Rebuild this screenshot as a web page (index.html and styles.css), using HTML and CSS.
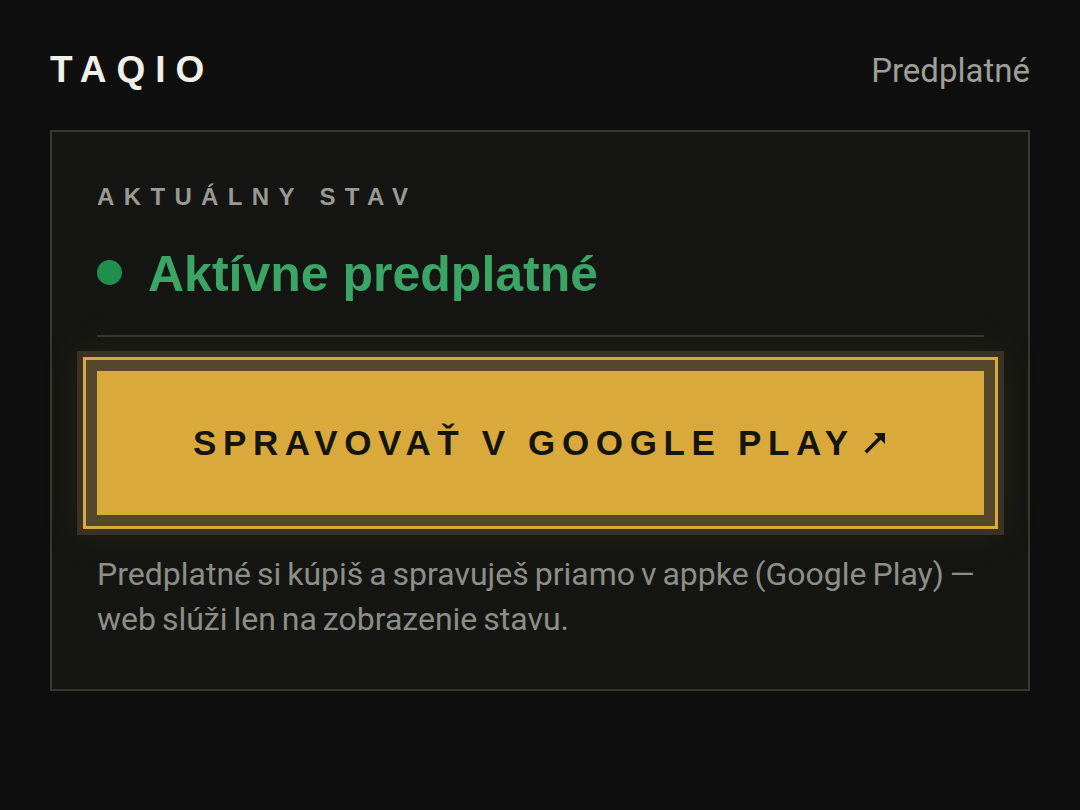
FILE: index.html
```html
<!DOCTYPE html>
<html lang="sk">
<head>
<meta charset="utf-8">
<title>TAQIO – Predplatné</title>
<link rel="stylesheet" href="styles.css">
</head>
<body>
<div class="page">
  <header class="topbar">
    <div class="logo">TAQIO</div>
    <div class="nav-title">Predplatné</div>
  </header>
  <section class="card">
    <div class="label">AKTUÁLNY STAV</div>
    <div class="status">
      <span class="dot"></span>
      <span class="status-text">Aktívne predplatné</span>
    </div>
    <div class="divider"></div>
    <a class="manage-btn" href="#"><span class="btn-text">SPRAVOVAŤ V GOOGLE PLAY</span><svg class="arrow" viewBox="0 0 24 24" width="24" height="24" aria-hidden="true"><path d="M3 21 L16 8" stroke="#141410" stroke-width="3.6" stroke-linecap="square" fill="none"/><path d="M10 3 H21 V14 Z" fill="#141410"/></svg></a>
    <p class="note">Predplatné si kúpiš a spravuješ priamo v appke (Google Play) — web slúži len na zobrazenie stavu.</p>
  </section>
</div>
</body>
</html>
```
FILE: styles.css
```css
html, body {
  margin: 0;
  padding: 0;
  background: #0e0f0e;
}
body {
  font-family: Roboto, "Liberation Sans", sans-serif;
}
.page {
  width: 980px;
  margin: 0 auto;
}
.topbar {
  display: flex;
  justify-content: space-between;
  align-items: baseline;
  padding-top: 51px;
  margin-bottom: 42px;
}
.logo {
  font-family: "Liberation Sans", Arial, sans-serif;
  font-weight: 700;
  font-size: 37px;
  line-height: 1;
  letter-spacing: 0.27em;
  color: #f0efe8;
}
.nav-title {
  font-family: Roboto, sans-serif;
  font-size: 33px;
  line-height: 1;
  color: #9e9f97;
}
.card {
  box-sizing: border-box;
  border: 2px solid #37382f;
  background: #151613;
  padding: 53px 44px 47px 45px;
}
.label {
  font-family: "Liberation Sans", Arial, sans-serif;
  font-weight: 700;
  font-size: 24px;
  line-height: 1;
  letter-spacing: 0.39em;
  color: #9a9a93;
}
.status {
  display: flex;
  align-items: center;
  gap: 26px;
  margin-top: 40px;
}
.dot {
  width: 25px;
  height: 25px;
  border-radius: 50%;
  background: #1f8f4e;
  flex: none;
  margin-top: -3px;
}
.status-text {
  font-family: "Liberation Sans", Arial, sans-serif;
  font-weight: 700;
  font-size: 50px;
  line-height: 1;
  letter-spacing: 0;
  color: #3aa565;
}
.divider {
  height: 2px;
  background: #35362f;
  margin-top: 36px;
}
.manage-btn {
  display: flex;
  align-items: center;
  justify-content: center;
  gap: 16px;
  height: 144px;
  margin-top: 34px;
  background: #d9a93b;
  color: #141410;
  text-decoration: none;
  box-shadow:
    0 0 0 11px #55472a,
    0 0 0 14px #d9a93b,
    0 0 0 20px #3b3322,
    0 0 40px 22px rgba(217, 169, 60, 0.07);
}
.btn-text {
  font-family: "Liberation Sans", Arial, sans-serif;
  font-weight: 700;
  font-size: 35px;
  letter-spacing: 0.19em;
  margin-right: -0.19em;
}
.arrow {
  width: 24px;
  height: 24px;
  flex: none;
  margin-top: -2px;
}
.note {
  margin: 37px 0 0;
  font-family: Roboto, sans-serif;
  font-size: 32px;
  line-height: 45px;
  word-spacing: -2px;
  color: #8d8e86;
}
```
